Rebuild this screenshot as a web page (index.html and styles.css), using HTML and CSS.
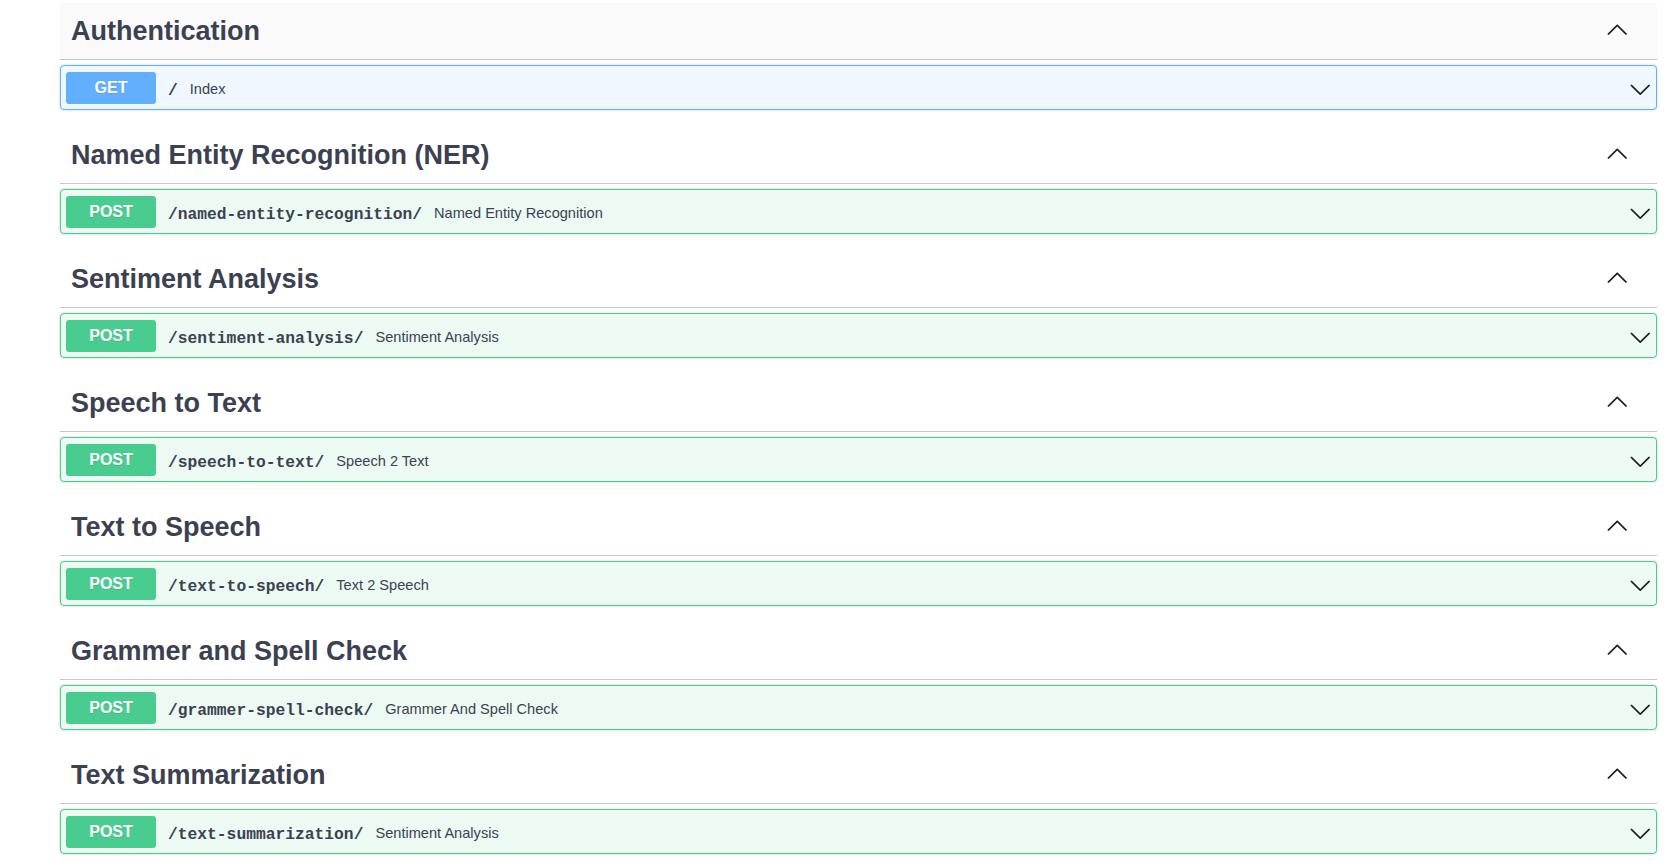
FILE: index.html
```html
<!DOCTYPE html>
<html lang="en">
<head>
<meta charset="utf-8">
<title>API docs</title>
<link rel="stylesheet" href="styles.css">
</head>
<body>
<div class="container">

  <section class="tag-section">
    <div class="tag-header is-hover">
      <h3 class="tag-title">Authentication</h3>
      <svg class="tag-arrow" width="22.5" height="22.5" viewBox="0 0 20 20"><path d="M17.418 6.109c.272-.268.709-.268.979 0s.271.701 0 .969l-7.908 7.83c-.27.268-.707.268-.979 0l-7.908-7.83c-.27-.268-.27-.701 0-.969.271-.268.709-.268.979 0L10 13.25l7.418-7.141z" transform="rotate(180 10 10)"/></svg>
    </div>
    <div class="opblock opblock-get">
      <span class="method">GET</span>
      <span class="path">/</span>
      <span class="desc">Index</span>
      <svg class="op-arrow" width="22.5" height="22.5" viewBox="0 0 20 20"><path d="M17.418 6.109c.272-.268.709-.268.979 0s.271.701 0 .969l-7.908 7.83c-.27.268-.707.268-.979 0l-7.908-7.83c-.27-.268-.27-.701 0-.969.271-.268.709-.268.979 0L10 13.25l7.418-7.141z"/></svg>
    </div>
  </section>

  <section class="tag-section">
    <div class="tag-header">
      <h3 class="tag-title">Named Entity Recognition (NER)</h3>
      <svg class="tag-arrow" width="22.5" height="22.5" viewBox="0 0 20 20"><path d="M17.418 6.109c.272-.268.709-.268.979 0s.271.701 0 .969l-7.908 7.83c-.27.268-.707.268-.979 0l-7.908-7.83c-.27-.268-.27-.701 0-.969.271-.268.709-.268.979 0L10 13.25l7.418-7.141z" transform="rotate(180 10 10)"/></svg>
    </div>
    <div class="opblock opblock-post">
      <span class="method">POST</span>
      <span class="path">/named-entity-recognition/</span>
      <span class="desc">Named Entity Recognition</span>
      <svg class="op-arrow" width="22.5" height="22.5" viewBox="0 0 20 20"><path d="M17.418 6.109c.272-.268.709-.268.979 0s.271.701 0 .969l-7.908 7.83c-.27.268-.707.268-.979 0l-7.908-7.83c-.27-.268-.27-.701 0-.969.271-.268.709-.268.979 0L10 13.25l7.418-7.141z"/></svg>
    </div>
  </section>

  <section class="tag-section">
    <div class="tag-header">
      <h3 class="tag-title">Sentiment Analysis</h3>
      <svg class="tag-arrow" width="22.5" height="22.5" viewBox="0 0 20 20"><path d="M17.418 6.109c.272-.268.709-.268.979 0s.271.701 0 .969l-7.908 7.83c-.27.268-.707.268-.979 0l-7.908-7.83c-.27-.268-.27-.701 0-.969.271-.268.709-.268.979 0L10 13.25l7.418-7.141z" transform="rotate(180 10 10)"/></svg>
    </div>
    <div class="opblock opblock-post">
      <span class="method">POST</span>
      <span class="path">/sentiment-analysis/</span>
      <span class="desc">Sentiment Analysis</span>
      <svg class="op-arrow" width="22.5" height="22.5" viewBox="0 0 20 20"><path d="M17.418 6.109c.272-.268.709-.268.979 0s.271.701 0 .969l-7.908 7.83c-.27.268-.707.268-.979 0l-7.908-7.83c-.27-.268-.27-.701 0-.969.271-.268.709-.268.979 0L10 13.25l7.418-7.141z"/></svg>
    </div>
  </section>

  <section class="tag-section">
    <div class="tag-header">
      <h3 class="tag-title">Speech to Text</h3>
      <svg class="tag-arrow" width="22.5" height="22.5" viewBox="0 0 20 20"><path d="M17.418 6.109c.272-.268.709-.268.979 0s.271.701 0 .969l-7.908 7.83c-.27.268-.707.268-.979 0l-7.908-7.83c-.27-.268-.27-.701 0-.969.271-.268.709-.268.979 0L10 13.25l7.418-7.141z" transform="rotate(180 10 10)"/></svg>
    </div>
    <div class="opblock opblock-post">
      <span class="method">POST</span>
      <span class="path">/speech-to-text/</span>
      <span class="desc">Speech 2 Text</span>
      <svg class="op-arrow" width="22.5" height="22.5" viewBox="0 0 20 20"><path d="M17.418 6.109c.272-.268.709-.268.979 0s.271.701 0 .969l-7.908 7.83c-.27.268-.707.268-.979 0l-7.908-7.83c-.27-.268-.27-.701 0-.969.271-.268.709-.268.979 0L10 13.25l7.418-7.141z"/></svg>
    </div>
  </section>

  <section class="tag-section">
    <div class="tag-header">
      <h3 class="tag-title">Text to Speech</h3>
      <svg class="tag-arrow" width="22.5" height="22.5" viewBox="0 0 20 20"><path d="M17.418 6.109c.272-.268.709-.268.979 0s.271.701 0 .969l-7.908 7.83c-.27.268-.707.268-.979 0l-7.908-7.83c-.27-.268-.27-.701 0-.969.271-.268.709-.268.979 0L10 13.25l7.418-7.141z" transform="rotate(180 10 10)"/></svg>
    </div>
    <div class="opblock opblock-post">
      <span class="method">POST</span>
      <span class="path">/text-to-speech/</span>
      <span class="desc">Text 2 Speech</span>
      <svg class="op-arrow" width="22.5" height="22.5" viewBox="0 0 20 20"><path d="M17.418 6.109c.272-.268.709-.268.979 0s.271.701 0 .969l-7.908 7.83c-.27.268-.707.268-.979 0l-7.908-7.83c-.27-.268-.27-.701 0-.969.271-.268.709-.268.979 0L10 13.25l7.418-7.141z"/></svg>
    </div>
  </section>

  <section class="tag-section">
    <div class="tag-header">
      <h3 class="tag-title">Grammer and Spell Check</h3>
      <svg class="tag-arrow" width="22.5" height="22.5" viewBox="0 0 20 20"><path d="M17.418 6.109c.272-.268.709-.268.979 0s.271.701 0 .969l-7.908 7.83c-.27.268-.707.268-.979 0l-7.908-7.83c-.27-.268-.27-.701 0-.969.271-.268.709-.268.979 0L10 13.25l7.418-7.141z" transform="rotate(180 10 10)"/></svg>
    </div>
    <div class="opblock opblock-post">
      <span class="method">POST</span>
      <span class="path">/grammer-spell-check/</span>
      <span class="desc">Grammer And Spell Check</span>
      <svg class="op-arrow" width="22.5" height="22.5" viewBox="0 0 20 20"><path d="M17.418 6.109c.272-.268.709-.268.979 0s.271.701 0 .969l-7.908 7.83c-.27.268-.707.268-.979 0l-7.908-7.83c-.27-.268-.27-.701 0-.969.271-.268.709-.268.979 0L10 13.25l7.418-7.141z"/></svg>
    </div>
  </section>

  <section class="tag-section">
    <div class="tag-header">
      <h3 class="tag-title">Text Summarization</h3>
      <svg class="tag-arrow" width="22.5" height="22.5" viewBox="0 0 20 20"><path d="M17.418 6.109c.272-.268.709-.268.979 0s.271.701 0 .969l-7.908 7.83c-.27.268-.707.268-.979 0l-7.908-7.83c-.27-.268-.27-.701 0-.969.271-.268.709-.268.979 0L10 13.25l7.418-7.141z" transform="rotate(180 10 10)"/></svg>
    </div>
    <div class="opblock opblock-post">
      <span class="method">POST</span>
      <span class="path">/text-summarization/</span>
      <span class="desc">Sentiment Analysis</span>
      <svg class="op-arrow" width="22.5" height="22.5" viewBox="0 0 20 20"><path d="M17.418 6.109c.272-.268.709-.268.979 0s.271.701 0 .969l-7.908 7.83c-.27.268-.707.268-.979 0l-7.908-7.83c-.27-.268-.27-.701 0-.969.271-.268.709-.268.979 0L10 13.25l7.418-7.141z"/></svg>
    </div>
  </section>

</div>
</body>
</html>
```

FILE: styles.css
```css
html, body {
  margin: 0;
  padding: 0;
  background: #ffffff;
}

body {
  font-family: "Liberation Sans", Arial, sans-serif;
  color: #3b4151;
}

.container {
  margin: 0 10px 0 60px;
  padding-top: 3px;
}

.tag-section {
  display: flex;
  flex-direction: column;
}

.tag-header {
  display: flex;
  align-items: center;
  box-sizing: border-box;
  height: 57px;
  padding: 0 29px 0 11px;
  border-bottom: 1px solid rgba(59, 65, 81, 0.3);
  margin-bottom: 5px;
}

.tag-header.is-hover {
  background: #fafafa;
}

.tag-title {
  flex: 1 1 auto;
  margin: 0;
  font-size: 27px;
  font-weight: 700;
  line-height: 31px;
  color: #3b4151;
}

.tag-arrow {
  flex: none;
  margin-bottom: 2px;
  fill: #1b1b1b;
}

.opblock {
  display: flex;
  align-items: center;
  box-sizing: border-box;
  height: 45px;
  padding: 0 5px 0 5px;
  margin-bottom: 17px;
  border: 1px solid;
  border-radius: 4px;
  box-shadow: 0 0 3px rgba(0, 0, 0, 0.19);
}

.opblock-get {
  background: #eff7ff;
  border-color: #61affe;
}

.opblock-post {
  background: #edfaf4;
  border-color: #49cc90;
}

.method {
  flex: none;
  box-sizing: border-box;
  width: 90px;
  height: 32px;
  margin-top: 1px;
  border-radius: 3px;
  font-size: 16px;
  font-weight: 700;
  line-height: 32px;
  text-align: center;
  color: #ffffff;
  text-shadow: 0 1px 0 rgba(0, 0, 0, 0.1);
}

.opblock-get .method {
  background: #61affe;
}

.opblock-post .method {
  background: #49cc90;
}

.path {
  flex: none;
  padding: 0 12px;
  margin-top: 5px;
  font-family: "Liberation Mono", "DejaVu Sans Mono", monospace;
  font-size: 16.3px;
  font-weight: 700;
  color: #3b4151;
}

.desc {
  flex: 1 1 auto;
  margin-top: 3px;
  font-size: 14.6px;
  color: #3b4151;
}

.op-arrow {
  flex: none;
  margin-top: 3px;
  fill: #1b1b1b;
}
```
